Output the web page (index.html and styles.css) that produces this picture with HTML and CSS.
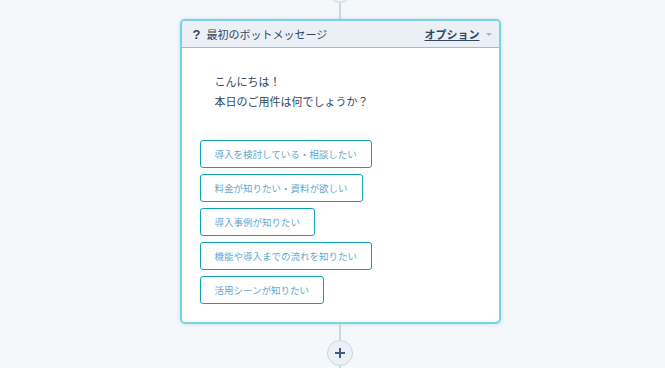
FILE: index.html
```html
<!DOCTYPE html>
<html lang="ja">

<head>
  <meta charset="UTF-8">
  <meta name="viewport" content="width=device-width, initial-scale=1.0">
  <title>ボット</title>
  <link rel="stylesheet" href="styles.css">
</head>

<body>
  <main class="flow">
    <div class="node node-top"></div>
    <div class="connector"></div>

    <section class="card">
      <header class="card-head">
        <span class="q-mark">?</span>
        <span class="card-title">最初のボットメッセージ</span>
        <a class="options">オプション</a>
        <span class="caret"></span>
      </header>

      <div class="card-body">
        <p class="message">こんにちは！<br>本日のご用件は何でしょうか？</p>

        <div class="choices">
          <button class="choice">導入を検討している・相談したい</button>
          <button class="choice">料金が知りたい・資料が欲しい</button>
          <button class="choice">導入事例が知りたい</button>
          <button class="choice">機能や導入までの流れを知りたい</button>
          <button class="choice">活用シーンが知りたい</button>
        </div>
      </div>
    </section>

    <div class="connector"></div>
    <div class="node node-add">
      <svg width="12" height="12" viewBox="0 0 12 12">
        <path d="M6 1v10M1 6h10" stroke="#425b76" stroke-width="2" fill="none" />
      </svg>
    </div>
    <div class="connector short"></div>
  </main>
</body>

</html>
```

FILE: styles.css
```css
* {
  box-sizing: border-box;
}

html,
body {
  margin: 0;
  height: 100%;
  overflow: hidden;
  background-color: #f5f8fa;
}

body {
  font-family: "Noto Sans CJK JP", "Noto Sans", sans-serif;
  color: #33475b;
}

.flow {
  display: flex;
  flex-direction: column;
  align-items: center;
  padding-left: 15px;
}

.node {
  width: 26px;
  height: 26px;
  border: 1px solid #cbd6e2;
  border-radius: 50%;
  background-color: #eaf0f6;
  display: flex;
  align-items: center;
  justify-content: center;
}

.node-top {
  margin-top: -23px;
}

.connector {
  width: 2px;
  height: 16px;
  background-color: #cbd6e2;
}

.connector.short {
  height: 4px;
}

/* カード本体 */
.card {
  width: 321px;
  height: 305px;
  border: 2px solid #7fd0dd;
  border-radius: 5px;
  background-color: #fff;
  box-shadow: 0 0 4px rgba(0, 164, 189, 0.25);
  overflow: hidden;
}

.card-head {
  height: 27px;
  display: flex;
  align-items: center;
  padding: 0 7px 0 11px;
  background-color: #eaf0f6;
  border-bottom: 1px solid #a9b8c8;
  font-size: 11px;
}

.q-mark {
  font-family: "Liberation Sans", sans-serif;
  font-weight: bold;
  font-size: 13px;
  margin-right: 6px;
}

.card-title {
  flex: 1;
}

.options {
  font-weight: bold;
  text-decoration: underline;
  color: #33475b;
}

.caret {
  width: 0;
  height: 0;
  margin-left: 6px;
  border-left: 3px solid transparent;
  border-right: 3px solid transparent;
  border-top: 3px solid #a6b4c3;
}

.card-body {
  padding: 23px 0 0 18px;
}

.message {
  margin: 0 0 29px 15px;
  font-size: 11px;
  line-height: 20px;
}

.choices {
  display: flex;
  flex-direction: column;
  align-items: flex-start;
  gap: 6px;
}

.choice {
  height: 28px;
  padding: 0 14px;
  border: 1px solid #12a2b8;
  border-radius: 3px;
  background-color: #fff;
  color: #5ea9cd;
  font-family: "Noto Sans CJK JP", sans-serif;
  font-size: 9.5px;
}
```
